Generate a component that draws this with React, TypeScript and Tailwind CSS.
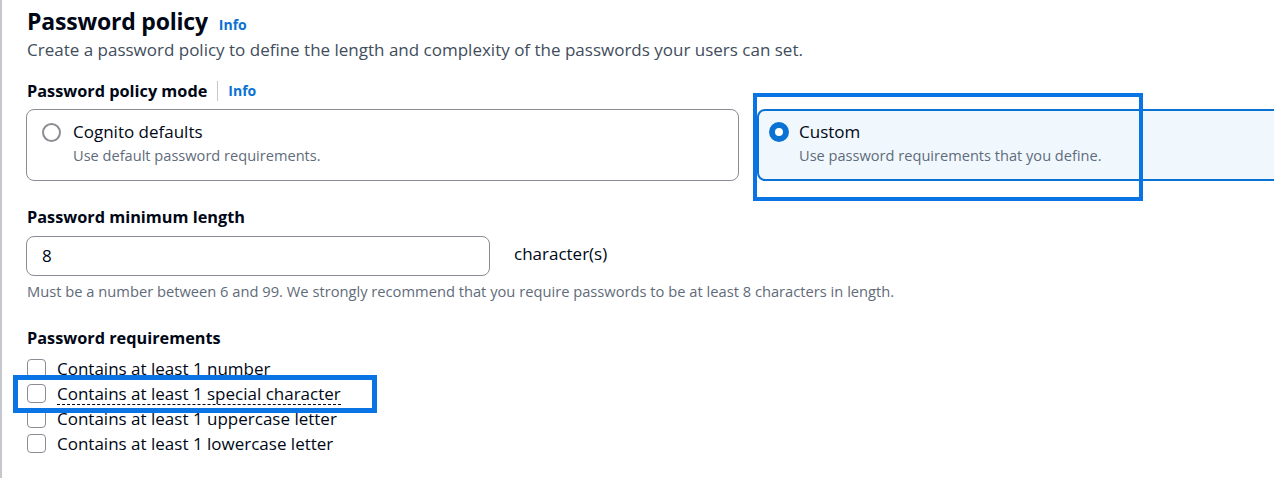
import React from "react";

const font = "font-['Open_Sans','Noto_Sans',sans-serif]";

function Radio({ checked }: { checked?: boolean }) {
  if (checked) {
    return <span className="block h-[20px] w-[20px] shrink-0 rounded-full border-[6px] border-[#0972d3] bg-white" />;
  }
  return <span className="block h-[19px] w-[19px] shrink-0 rounded-full border-2 border-[#8c8c94] bg-white" />;
}

function Checkbox() {
  return <span className="block h-[19px] w-[19px] shrink-0 rounded-[4px] border-[1.5px] border-[#8c8c94] bg-white" />;
}

const requirements = [
  "Contains at least 1 number",
  "Contains at least 1 special character",
  "Contains at least 1 uppercase letter",
  "Contains at least 1 lowercase letter",
];

export default function App() {
  return (
    <div className={`${font} relative h-[478px] w-[1274px] overflow-hidden bg-white text-[#000716]`}>
      <div className="h-full border-l-2 border-[#c6c6cd] pl-[25px] pt-[6px]">
        {/* header */}
        <div className="flex items-baseline gap-[11px]">
          <h1 className="text-[23px] font-bold leading-[30px] tracking-[-0.2px]">Password policy</h1>
          <a className="text-[14px] font-bold text-[#0972d3]">Info</a>
        </div>
        <p className="mt-[2px] text-[17px] leading-[24px] text-[#414d5c]">
          Create a password policy to define the length and complexity of the passwords your users can set.
        </p>

        {/* mode */}
        <div className="mt-[17px] flex items-center leading-[24px]">
          <span className="text-[16.3px] font-bold">Password policy mode</span>
          <span className="mx-[10px] h-[20px] w-px bg-[#c6c6cd]" />
          <a className="text-[14px] font-bold text-[#0972d3]">Info</a>
        </div>
        <div className="ml-[-1px] mt-[6px] grid w-[1450px] grid-cols-[713px_713px] gap-[18px]">
          <div className="flex h-[72px] gap-[12px] rounded-[8px] border border-[#8c8c94] px-[15px] pt-[10px]">
            <div className="flex h-[24px] items-center"><Radio /></div>
            <div>
              <div className="text-[17px] leading-[24px]">Cognito defaults</div>
              <div className="text-[14.6px] leading-[22px] text-[#5f6b7a]">Use default password requirements.</div>
            </div>
          </div>
          <div className="flex h-[72px] gap-[10px] rounded-[8px] border-2 border-[#0972d3] bg-[#f0f8fe] px-[10px] pt-[9px]">
            <div className="flex h-[24px] items-center"><Radio checked /></div>
            <div>
              <div className="text-[17px] leading-[24px]">Custom</div>
              <div className="text-[14.6px] leading-[22px] text-[#5f6b7a]">Use password requirements that you define.</div>
            </div>
          </div>
        </div>

        {/* minimum length */}
        <div className="mt-[24px] text-[16.3px] font-bold leading-[24px]">Password minimum length</div>
        <div className="ml-[-1px] mt-[7px] flex items-start gap-[24px]">
          <div className="flex h-[40px] w-[464px] items-center rounded-[8px] border border-[#8c8c94] px-[15px] text-[17px]">8</div>
          <span className="pt-[6px] text-[17px] leading-[24px]">character(s)</span>
        </div>
        <p className="mt-[5px] text-[14.7px] leading-[20px] text-[#5f6b7a]">
          Must be a number between 6 and 99. We strongly recommend that you require passwords to be at least 8 characters in length.
        </p>

        {/* requirements */}
        <div className="mt-[25px] text-[16.3px] font-bold leading-[24px]">Password requirements</div>
        <div className="mt-[6px] flex flex-col">
          {requirements.map((r, i) => (
            <div key={r} className="flex h-[25px] items-center gap-[11px]">
              <Checkbox />
              <span
                className={
                  "text-[17px] " +
                  (i === 1 ? "border-b border-dashed border-[#000716] leading-[21px]" : "leading-[22px]")
                }
              >
                {r}
              </span>
            </div>
          ))}
        </div>
      </div>

      {/* annotation boxes */}
      <div className="absolute left-[753px] top-[93px] h-[108px] w-[390px] border-[4px] border-[#0a74e4]" />
      <div className="absolute left-[13px] top-[375px] h-[38px] w-[364px] border-[5px] border-[#0a74e4]" />
    </div>
  );
}
